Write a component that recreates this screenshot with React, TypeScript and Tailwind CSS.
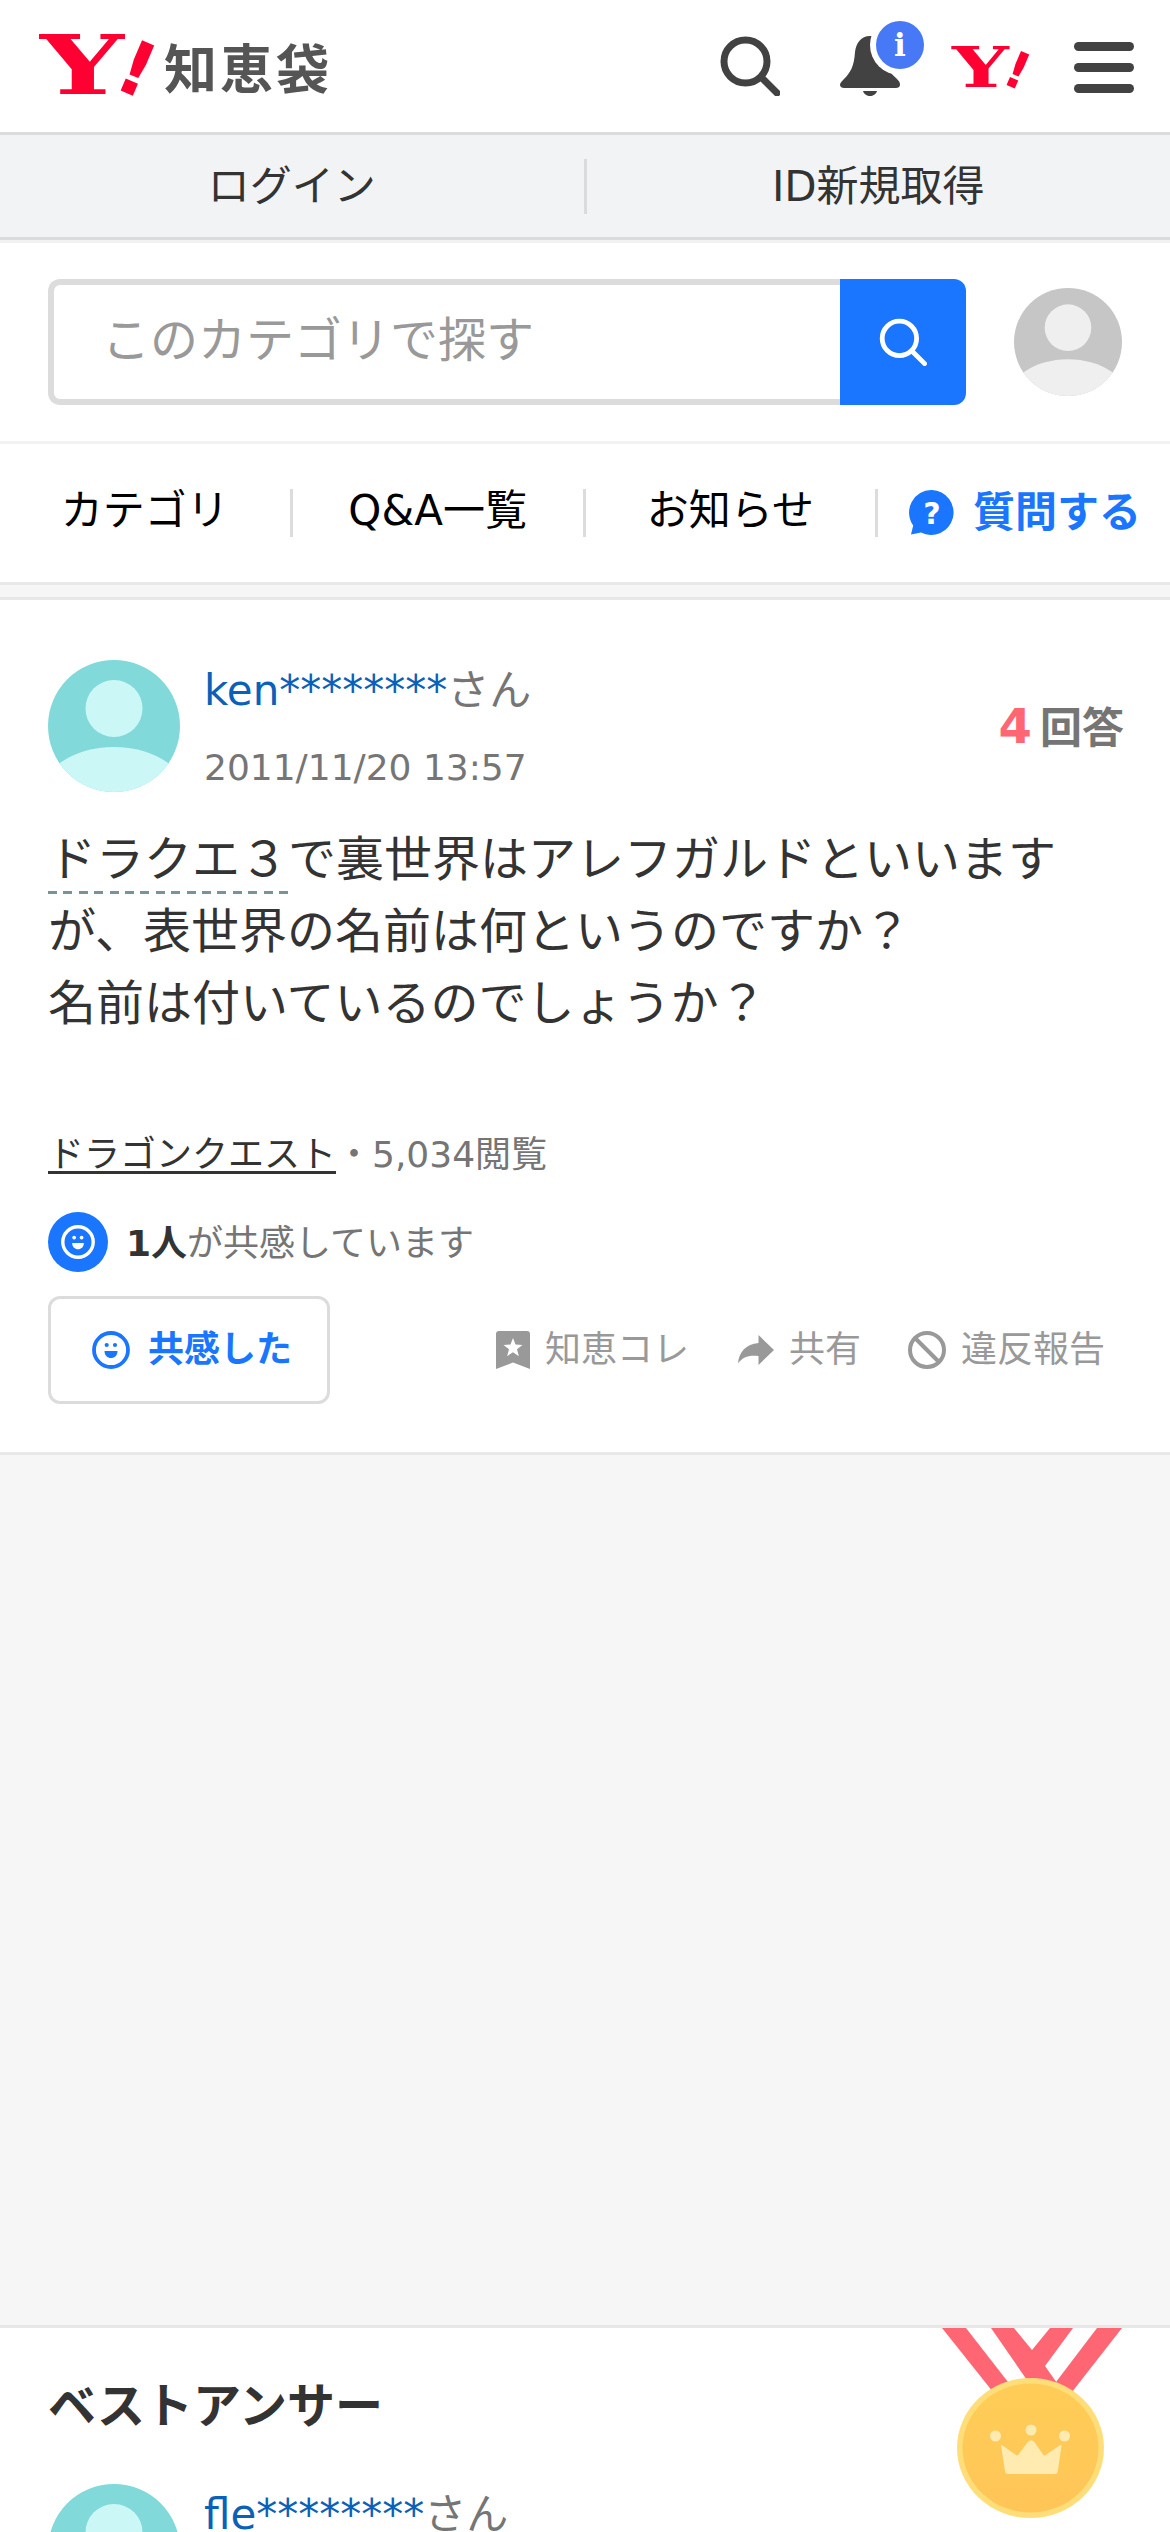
import type { ReactNode } from "react";

// ロゴの「Y!」部分
const YahooMark = ({ className = "" }: { className?: string }) => (
  <svg viewBox="0 0 116 62" className={`overflow-visible ${className}`} fill="#ff0033" aria-label="Yahoo!">
    <text
      transform="translate(1 61) scale(1.4 0.98)"
      fontFamily="DejaVu Serif"
      fontWeight="700"
      fontSize="84"
    >
      Y
    </text>
    <text
      transform="translate(72 53.5) rotate(23)"
      fontFamily="DejaVu Sans"
      fontWeight="700"
      fontSize="75"
    >
      !
    </text>
  </svg>
);

const SearchIcon = ({ className = "", width = 7 }: { className?: string; width?: number }) => (
  <svg viewBox="0 0 60 60" className={className} fill="none" stroke="currentColor" strokeWidth={width} strokeLinecap="round">
    <circle cx="25.5" cy="25.5" r="21.5" />
    <path d="M41.5 41.5 57 57" />
  </svg>
);

const BellIcon = () => (
  <svg viewBox="0 0 86 78" className="h-[78px] w-[86px]">
    <path
      d="M30 16c-9 0-14 7-15 16-1 14-4 20-11 27-3 3-4 4-4 6 0 2 2 3 4 3h52c2 0 4-1 4-3 0-3-1-4-4-7-7-6-10-12-11-26-1-9-6-16-15-16z"
      fill="#424242"
    />
    <path d="M23 71h14c-1 3.500-4 5-7 5s-6-1.500-7-5z" fill="#424242" />
    <circle cx="60" cy="25" r="30" fill="#fff" />
    <circle cx="60" cy="25" r="24" fill="#4778f5" />
    <text x="60" y="36" textAnchor="middle" fontFamily="DejaVu Serif" fontWeight="700" fontSize="31" fill="#fff">
      i
    </text>
  </svg>
);

const MenuIcon = () => (
  <span className="flex h-[51px] w-[60px] flex-col justify-between">
    <span className="h-[9px] rounded-full bg-[#424242]" />
    <span className="h-[9px] rounded-full bg-[#424242]" />
    <span className="h-[9px] rounded-full bg-[#424242]" />
  </span>
);

const Avatar = ({ className = "", bg, fg, id }: { className?: string; bg: string; fg: string; id: string }) => (
  <svg viewBox="0 0 132 132" className={`shrink-0 ${className}`}>
    <clipPath id={id}>
      <circle cx="66" cy="66" r="66" />
    </clipPath>
    <g clipPath={`url(#${id})`}>
      <rect width="132" height="132" fill={bg} />
      <circle cx="66" cy="48.500" r="28.500" fill={fg} />
      <ellipse cx="66" cy="141" rx="76" ry="54" fill={fg} />
    </g>
  </svg>
);

const SmileIcon = ({ className = "", width = 3.8 }: { className?: string; width?: number }) => (
  <svg viewBox="0 0 38 38" className={className} fill="currentColor">
    <circle cx="19" cy="19" r="17" fill="none" stroke="currentColor" strokeWidth={width} />
    <circle cx="14.700" cy="14" r="2.100" />
    <circle cx="23" cy="14" r="2.100" />
    <path d="M12.500 20h13c0 4.500-3 7-6.500 7s-6.500-2.500-6.500-7z" />
  </svg>
);

const QuestionBubble = () => (
  <svg viewBox="0 0 46 46" className="h-[46px] w-[46px]">
    <path d="M23 0a22.500 22.500 0 1 1-11 42.600L2 44.500l2.200-9A22.500 22.500 0 0 1 23 0z" fill="#1a75ff" />
    <text x="23" y="34" textAnchor="middle" fontFamily="DejaVu Sans" fontWeight="700" fontSize="30" fill="#fff">
      ?
    </text>
  </svg>
);

const BookmarkIcon = () => (
  <svg viewBox="0 0 34 38" className="h-[38px] w-[34px]">
    <path d="M3 0h28a3 3 0 0 1 3 3v35l-17-6.500L0 38V3a3 3 0 0 1 3-3z" fill="#999" />
    <path d="m17 7 2.500 6.500 7 .4-5.500 4.400 1.900 6.900-5.900-3.900-5.900 3.900 1.900-6.900-5.500-4.400 7-.4z" fill="#fff" />
  </svg>
);

const ShareIcon = () => (
  <svg viewBox="0 0 36 30" className="h-[30px] w-[36px]" fill="#999">
    <path d="M20.500 0 36 15 20.500 30v-9C11 20 5 21.500 0 28.500 1 17 8 9 20.500 8z" />
  </svg>
);

const BanIcon = () => (
  <svg viewBox="0 0 38 38" className="size-[38px]" fill="none" stroke="#999" strokeWidth="4">
    <circle cx="19" cy="19" r="17" />
    <path d="m7 7 24 24" />
  </svg>
);

// ベストアンサーのメダル
const Medal = () => (
  <svg viewBox="0 0 180 190" className="h-[190px] w-[180px]">
    <defs>
      <linearGradient id="gold" x1="0" y1="0" x2="0" y2="1">
        <stop offset="0" stopColor="#ffcd57" />
        <stop offset="1" stopColor="#ffc557" />
      </linearGradient>
    </defs>
    <g fill="#ff6673">
      <path d="M0 0h24l42 54-15 10z" />
      <path d="M155 0h25l-50 64-16-10z" />
      <path d="M49 0h23l18 22L108 0h23l-28 38 12 17H87z" />
    </g>
    <ellipse cx="88.500" cy="120" rx="73.500" ry="70" fill="#ffde7a" />
    <ellipse cx="88.500" cy="120" rx="68" ry="64.500" fill="url(#gold)" />
    <g fill="#ffebb0">
      <circle cx="53.500" cy="108" r="5.500" />
      <circle cx="89" cy="102" r="5.500" />
      <circle cx="122.500" cy="108" r="5.500" />
      <path d="M59 117.500q0-1.200 1.500 0L74 127q1.500 1 2.600-.5l9-12.500q3.400-3.400 6.800 0l8.600 12.500q1.100 1.500 2.600.5l14-9.500q2-1.200 2 0l-4 26.500q-.5 2-2.500 2H66q-2.500 0-2.900-2z" />
    </g>
  </svg>
);

const NavItem = ({ children }: { children: ReactNode }) => (
  <a className="flex flex-1 items-center justify-center border-r-3 border-[#dcdcdc] text-[42px] leading-none text-black">
    <span className="-mt-[5px]">{children}</span>
  </a>
);

const Action = ({ icon, children, className = "" }: { icon: ReactNode; children: ReactNode; className?: string }) => (
  <a className={`flex items-center text-[36px] leading-none text-[#999] ${className}`}>
    {icon}
    <span className="ml-[15px]">{children}</span>
  </a>
);

const UserInfo = ({ name, date, id }: { name: string; date: string; id: string }) => (
  <div className="flex">
    <Avatar id={id} bg="#82d9d9" fg="#ccf7f7" className="size-[132px]" />
    <div className="ml-6 flex flex-col pt-px">
      <p className="h-[60px] text-[42px] leading-[60px] text-[#757575]">
        <span className="text-[#0a61b8]">{name}</span>さん
      </p>
      <p className="mt-[23px] text-[36px] leading-[48px] text-[#757575]">{date}</p>
    </div>
  </div>
);

export default function App() {
  return (
    <div className="h-[2532px] w-[1170px] overflow-hidden bg-[#f6f6f6] font-['DejaVu_Sans','Noto_Sans_CJK_JP',sans-serif] text-[#333]">
      {/* ヘッダー */}
      <header className="flex h-[132px] justify-between bg-white pr-9 pl-[39px]">
        <div className="flex pt-[33px]">
          <YahooMark className="h-[62px] w-[116px]" />
          <span className="ml-[9px] pt-[5px] font-['Noto_Sans_CJK_JP',sans-serif] text-[53px] leading-[56px] font-bold tracking-[3px] text-[#555]">
            知恵袋
          </span>
        </div>
        <div className="flex items-start text-[#424242]">
          <SearchIcon className="mt-9 size-[60px]" />
          <span className="mt-5 ml-[60px]">
            <BellIcon />
          </span>
          <YahooMark className="mt-[46px] ml-[25px] h-[42px] w-[79px]" />
          <span className="mt-[42px] ml-[44px]">
            <MenuIcon />
          </span>
        </div>
      </header>

      {/* ログイン */}
      <div className="flex h-[108px] items-center border-y-3 border-[#d9dbdc] bg-[#f1f3f5] text-center text-[42px] leading-[54px]">
        <a className="flex-1 border-r-3 border-[#d9dbdc] pt-px">ログイン</a>
        <a className="flex-1 pt-px">ID新規取得</a>
      </div>

      {/* 検索 */}
      <div className="flex h-[204px] items-center justify-between border-y-3 border-[#f2f2f2] bg-white px-12">
        <div className="flex h-[126px] w-[918px]">
          <div className="flex flex-1 items-center rounded-l-xl border-6 border-r-0 border-[#dcdcdc] pb-1 pl-12 text-[48px] leading-none text-[#999]">
            このカテゴリで探す
          </div>
          <button className="flex w-[126px] items-center justify-center rounded-r-xl bg-[#1a75ff] text-white">
            <SearchIcon className="size-[48px]" width={6} />
          </button>
        </div>
        <Avatar id="me" bg="#c6c6c6" fg="#efefef" className="size-[108px]" />
      </div>

      {/* ナビ */}
      <nav className="flex h-[141px] border-b-3 border-[#e8e8e8] bg-white py-[45px]">
        <NavItem>カテゴリ</NavItem>
        <NavItem>Q&A一覧</NavItem>
        <NavItem>お知らせ</NavItem>
        <a className="flex flex-1 items-center justify-center pl-0.5 text-[42px] leading-none font-bold text-[#1a75ff]">
          <QuestionBubble />
          <span className="ml-[18px]">質問する</span>
        </a>
      </nav>

      {/* 質問 */}
      <section className="mt-3 h-[858px] border-y-3 border-[#e8e8e8] bg-white px-12 pt-[60px]">
        <div className="flex items-center justify-between">
          <UserInfo id="asker" name="ken********" date="2011/11/20 13:57" />
          <p className="-mr-0.5 flex items-baseline text-[42px] leading-none font-bold text-[#757575]">
            <span className="mr-2 text-[48px] text-[#ff6673]">4</span>回答
          </p>
        </div>
        <p className="mt-[31px] text-[48px] leading-[72px]">
          <span className="bg-[repeating-linear-gradient(90deg,#7a919e_0_9px,transparent_9px_15.4px)] bg-size-[100%_3px] bg-bottom bg-no-repeat pb-[7px]">
            ドラクエ３
          </span>
          で裏世界はアレフガルドといいますが、表世界の名前は何というのですか？
          <br />
          名前は付いているのでしょうか？
        </p>

        <p className="mt-[89px] text-[36px] leading-[54px] text-[#757575]">
          <a className="text-[#333] underline decoration-3 underline-offset-4">ドラゴンクエスト</a>・5,034閲覧
        </p>

        <div className="mt-[30px] flex h-[60px] items-center text-[36px] leading-[54px] text-[#757575]">
          <span className="mr-[18px] flex size-[60px] items-center justify-center rounded-full bg-[#1a75ff] text-white">
            <SmileIcon className="size-[34px]" />
          </span>
          <span className="pt-1">
            <b className="text-[#333]">1人</b>が共感しています
          </span>
        </div>

        <div className="mt-6 flex items-center">
          <button className="flex h-[108px] w-[282px] items-center rounded-xl border-3 border-[#dcdcdc] pl-[41px] text-[36px] leading-none font-bold text-[#1a75ff]">
            <SmileIcon className="size-[38px]" />
            <span className="ml-[18px]">共感した</span>
          </button>
          <Action icon={<BookmarkIcon />} className="ml-[166px]">知恵コレ</Action>
          <Action icon={<ShareIcon />} className="ml-[49px]">共有</Action>
          <Action icon={<BanIcon />} className="ml-[47px]">違反報告</Action>
        </div>
      </section>

      {/* ベストアンサー */}
      <section className="mt-[870px] border-t-3 border-[#e8e8e8] bg-white">
        <div className="flex h-[156px] items-start justify-between pr-12 pl-12">
          <h2 className="pt-[42px] text-[48px] leading-[72px] font-bold">ベストアンサー</h2>
          <Medal />
        </div>
        <div className="px-12">
          <UserInfo id="answerer" name="fle********" date="2011/11/20 14:10" />
        </div>
      </section>
    </div>
  );
}
